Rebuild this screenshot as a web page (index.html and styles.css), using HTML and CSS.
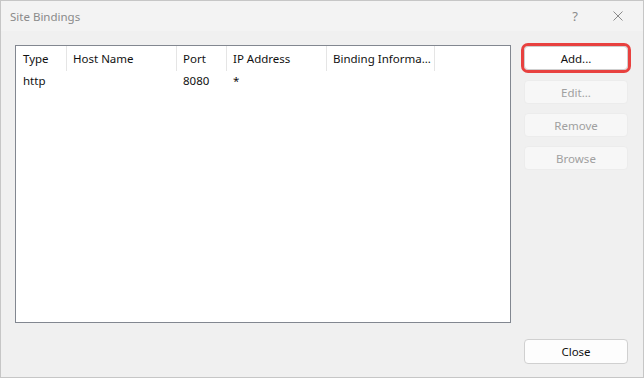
FILE: index.html
```html
<!DOCTYPE html>
<html lang="en">
<head>
  <meta charset="UTF-8">
  <title>Site Bindings</title>
  <link rel="stylesheet" href="styles.css">
</head>
<body>
  <div class="window">
    <div class="titlebar">
      <span class="title">Site Bindings</span>
      <span class="help">?</span>
      <span class="close-x">
        <svg width="10" height="10" viewBox="0 0 10 10"><path d="M0.5 0.5L9.5 9.5M9.5 0.5L0.5 9.5" stroke="#8a8a8a" stroke-width="1" fill="none"/></svg>
      </span>
    </div>
    <div class="content">
      <div class="listbox">
        <div class="row head">
          <div class="cell c1">Type</div>
          <div class="cell c2">Host Name</div>
          <div class="cell c3">Port</div>
          <div class="cell c4">IP Address</div>
          <div class="cell c5">Binding Informa...</div>
        </div>
        <div class="row">
          <div class="cell c1">http</div>
          <div class="cell c2"></div>
          <div class="cell c3">8080</div>
          <div class="cell c4">*</div>
          <div class="cell c5"></div>
        </div>
      </div>
      <div class="buttons">
        <div class="btn active">Add...</div>
        <div class="btn disabled">Edit...</div>
        <div class="btn disabled">Remove</div>
        <div class="btn disabled">Browse</div>
        <div class="btn close">Close</div>
      </div>
    </div>
  </div>
</body>
</html>
```

FILE: styles.css
```css
* {
  margin: 0;
  padding: 0;
  box-sizing: border-box;
}
body {
  font-family: "Noto Sans", "Open Sans", sans-serif;
  font-size: 11.5px;
  color: #111;
  background: #f0f0f0;
}
.window {
  width: 644px;
  height: 378px;
  border: 1px solid #c6c6c6;
  background: #f0f0f0;
  display: flex;
  flex-direction: column;
}
.titlebar {
  height: 30px;
  background: #f3f3f3;
  display: flex;
  align-items: center;
  padding-left: 9px;
}
.title {
  color: #8a8a8a;
  flex: 1;
}
.help {
  color: #8a8a8a;
  font-size: 13px;
  width: 44px;
  text-align: center;
}
.close-x {
  width: 46px;
  display: flex;
  justify-content: center;
  padding-right: 4px;
}
.content {
  flex: 1;
  display: flex;
  gap: 13px;
  padding: 14px 15px 13px 14px;
}
.listbox {
  width: 496px;
  height: 278px;
  background: #fff;
  border: 1px solid #828790;
}
.row {
  display: flex;
  height: 19px;
  align-items: center;
}
.row.head {
  height: 25px;
}
.cell {
  flex-shrink: 0;
  padding-left: 6px;
  height: 100%;
  display: flex;
  align-items: center;
  white-space: nowrap;
  overflow: hidden;
}
.c1 {
  width: 51px;
  padding-left: 7px;
}
.head .cell {
  border-right: 1px solid #e5e5e5;
}
.c2 { width: 110px; }
.c3 { width: 50px; }
.c4 { width: 100px; }
.c5 { width: 108px; }
.buttons {
  flex: 1;
  display: flex;
  flex-direction: column;
  gap: 9px;
  padding-top: 1px;
}
.btn {
  height: 24px;
  border-radius: 4px;
  display: flex;
  align-items: center;
  justify-content: center;
}
.btn.active {
  background: #fff;
  border: 1px solid #cfcfcf;
  outline: 3px solid #e8413f;
  outline-offset: 0;
  margin-bottom: 1px;
}
.btn.disabled {
  background: #f7f7f7;
  color: #a0a0a0;
  border: 1px solid #ececec;
}
.btn.close {
  margin-top: auto;
  height: 25px;
  background: #fdfdfd;
  border: 1px solid #d0d0d0;
}
```
